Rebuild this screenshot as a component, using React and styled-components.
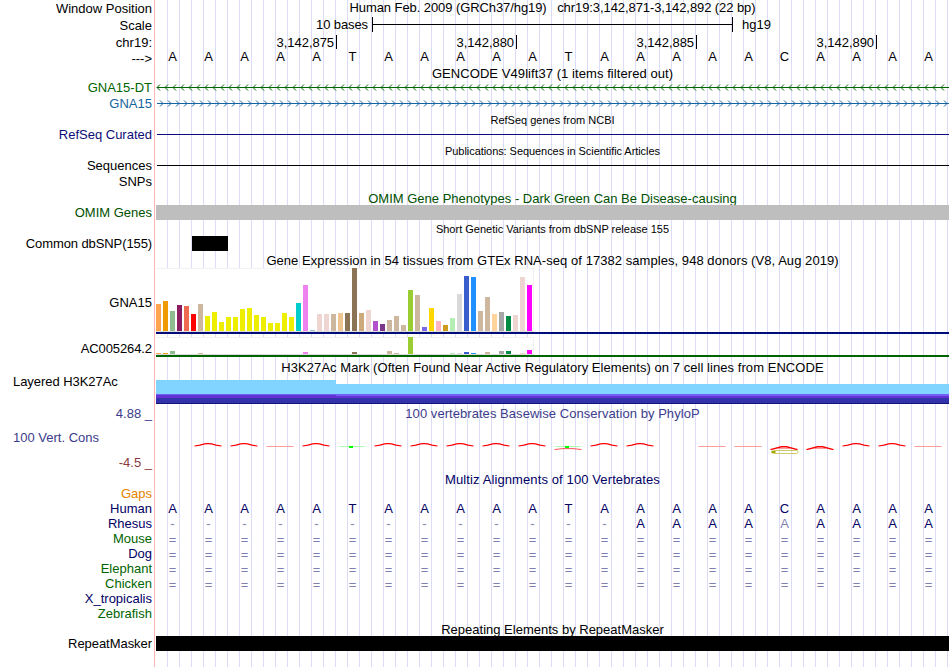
import React from 'react';
import styled, { createGlobalStyle } from 'styled-components';

const GlobalStyle = createGlobalStyle`
    body {
        margin: 0;
        background: #fff;
        overflow: hidden;
    }
`

const Browser = styled.div`
    display: flex;
    flex-direction: column;
    width: 949px;
    height: 667px;
    overflow: hidden;
    font-family: 'Liberation Sans', Arial, sans-serif;
    font-size: 13px;
    color: #000;
    background:
        linear-gradient(#ffb4b4, #ffb4b4) 154px 0 / 1px 100% no-repeat,
        repeating-linear-gradient(90deg, transparent 0 11px, #dcdcf8 11px 12px) 156px 0 / 793px 100% no-repeat;
`

const Row = styled.div`
    display: grid;
    grid-template-columns: 152px 793px;
    grid-template-rows: 100%;
    column-gap: 4px;
    height: ${props => props.$h}px;
    flex: none;
`

const Label = styled.div`
    display: flex;
    justify-content: ${props => props.$left ? 'flex-start' : 'flex-end'};
    align-items: center;
    padding-left: ${props => props.$left ? 13 : 0}px;
    padding-top: ${props => props.$drop || 0}px;
    padding-bottom: ${props => props.$lift || 0}px;
    box-sizing: border-box;
    color: ${props => props.$color || '#000'};
    letter-spacing: ${props => props.$track || 0}px;
    white-space: pre;
    line-height: 15px;
`

const Plot = styled.div`
    display: flex;
    align-items: ${props => props.$align || 'center'};
    min-width: 0;
`

const Title = styled.div`
    flex: 1;
    text-align: center;
    white-space: pre;
    line-height: 15px;
    font-size: ${props => props.$small ? 11 : 13}px;
    color: ${props => props.$color || '#000'};
    letter-spacing: ${props => props.$track || 0}px;
    padding-bottom: ${props => props.$lift || 0}px;
    padding-top: ${props => props.$drop || 0}px;
`

const Block = styled.div`
    height: ${props => props.$h || 15}px;
    width: ${props => props.$w ? props.$w + 'px' : '100%'};
    margin-left: ${props => props.$x || 0}px;
    background: ${props => props.$color};
`

const ScaleText = styled.span`
    width: ${props => props.$w}px;
    text-align: ${props => props.$align || 'right'};
    line-height: 15px;
    white-space: nowrap;
    letter-spacing: ${props => props.$track || 0}px;
`

const ScaleBar = styled.div`
    width: 359px;
    height: 15px;
    margin: 0 9px 0 4px;
    border: solid #000;
    border-width: 0 1px;
    background: linear-gradient(#000, #000) 0 7px / 100% 1px no-repeat;
`

const Tick = styled.div`
    box-sizing: border-box;
    width: ${props => props.$w}px;
    height: 14px;
    padding-right: 2px;
    border-right: 1px solid #000;
    text-align: right;
    line-height: 16px;
    letter-spacing: -0.05px;
`

const Bases = styled.div`
    display: grid;
    grid-template-columns: repeat(22, 36px);
    margin-left: -1.5px;
    padding-top: ${props => props.$drop || 0}px;
    padding-bottom: ${props => props.$lift || 0}px;
    text-align: center;
    line-height: 15px;
    color: ${props => props.$color || '#000'};
`

const Base = styled.span`
    opacity: ${props => props.$faint ? 0.5 : 1};
`

const Expression = styled.div`
    display: flex;
    align-items: flex-end;
    gap: 2px;
    box-sizing: border-box;
    width: 378px;
    height: ${props => props.$h}px;
    background: #fff;
    box-shadow: inset 0 1px #f2f2f2, inset -1px 0 #f2f2f2;
    border-bottom: 1px solid #dcdcdc;
`

const Bar = styled.div`
    width: 5px;
    flex: none;
    height: ${props => props.$h}px;
    background: ${props => props.$color};
`

const Stack = styled.div`
    width: 100%;
`

const Drawing = styled.svg`
    display: block;
    width: 793px;
    height: ${props => props.$h}px;
`

const yellow = '#eeee00'
const tan = '#cdb79e'
const pink = '#eed5d2'

const tissues = [
    '#ffa54f', '#ee9a00', '#8fbc8f', '#8b1c62', '#ee6a50', '#ff0000', tan,
    ...Array(13).fill(yellow),
    '#00cdcd', '#ee82ee', '#9ac0cd', pink, pink, tan, '#eec591', '#8b7355',
    '#8b7355', '#cdaa7d', pink, '#b452cd', '#7a378b', tan, tan, tan,
    '#9acd32', tan, '#7a67ee', '#ffd700', '#ffb6c1', '#cd9b1d', '#b4eeb4',
    '#d9d9d9', '#3a5fcd', '#1e90ff', tan, tan, '#ffd39b', '#a6a6a6',
    '#008b45', pink, pink, '#ff00ff',
]

const gna15 = [
    27, 30, 20, 26, 25, 17, 27, 15, 19, 9, 14, 14, 22, 23, 16, 14, 8, 8, 18,
    14, 28, 46, 1, 17, 17, 17, 18, 18, 63, 18, 21, 10, 7, 11, 15, 6, 41, 36,
    4, 23, 10, 6, 13, 37, 55, 54, 20, 34, 17, 19, 15, 16, 54, 46,
]

const ac005264 = [
    1, 1, 3, 0, 0, 0, 1, 0, 0, 0, 0, 0, 0, 0, 0, 0, 0, 0, 0,
    0, 0, 2, 0, 0, 0, 0, 0, 0, 2, 0, 0, 0, 0, 3, 1, 0, 17, 0,
    0, 0, 0, 0, 1, 1, 2, 1, 0, 2, 0, 3, 3, 0, 1, 4,
]

const human = 'AAAAATAAAAATAAAAACAAAA'
const rhesus = '-------------AAAAAAAAA'

const species = [
    { name: 'Mouse', color: '#006400' },
    { name: 'Dog', color: '#000064' },
    { name: 'Elephant', color: '#006400' },
    { name: 'Chicken', color: '#006400' },
]

// one mark per base: p peak, f flat, t green, u green over red, c deep, d dip
const conservation = ' ppfptpppppupp ffcdppf'

const Sequence = ({ bases, color, faint = () => false, ...rest }) => (
    <Bases $color={color} {...rest}>
        {bases.split('').map((b, i) => <Base key={i} $faint={faint(b, i)}>{b}</Base>)}
    </Bases>
)

const GeneLine = ({ color, reverse }) => (
    <Drawing $h={16} viewBox="0 0 793 16" stroke={color} fill="none">
        <path d="M1 7.5H793" />
        {Array.from({ length: 99 }, (_, i) => (
            <path
                key={i}
                d={reverse
                    ? `M${i * 8 + 4} 4.5L${i * 8 + 1} 7.5L${i * 8 + 4} 10.5`
                    : `M${i * 8 + 4} 4.5L${i * 8 + 7} 7.5L${i * 8 + 4} 10.5`}
            />
        ))}
    </Drawing>
)

const Mark = ({ type, x }) => {
    const peak = (
        <path d={`M${x - 13.5} 6L${x - 8} 5.2L${x - 3.5} 3.9Q${x} 3.2 ${x + 3.5} 3.9L${x + 8} 5.2L${x + 13.5} 6`} stroke="#ff0000" strokeWidth="1.2" />
    )
    const steep = (
        <>
            <path d={`M${x - 13.5} 9.6L${x - 2.5} 6.8H${x + 2.5}L${x + 13.5} 9.6`} stroke="#ff0000" strokeWidth="1.4" />
            <path d={`M${x - 6} 8.5H${x + 6}`} stroke="#ff8080" strokeWidth="0.8" />
        </>
    )
    const green = (
        <>
            <path d={`M${x - 13} 6.5H${x + 13}`} stroke="#b0ffb0" />
            <rect x={x - 3} y="6" width="4" height="2" fill="#00ff00" />
        </>
    )
    switch (type) {
        case 'p': return peak
        case 'f': return <path d={`M${x - 13.5} 6.5H${x + 13.5}`} stroke="#ff9c9c" />
        case 't': return green
        case 'u': return (
            <>
                {green}
                <path d={`M${x - 13.5} 9.6L${x - 5} 8.6H${x + 5}L${x + 13.5} 9.6`} stroke="#ff4040" strokeWidth="0.9" />
            </>
        )
        case 'd': return steep
        case 'c': return (
            <>
                {steep}
                <rect x={x - 12} y="10.5" width="26" height="3" rx="1.5" stroke="#cccc66" />
                <rect x={x - 12.5} y="11" width="4" height="2" fill="#a8a800" />
            </>
        )
        default: return null
    }
}

const TitleRow = ({ h, children, ...rest }) => (
    <Row $h={h}>
        <span />
        <Plot><Title {...rest}>{children}</Title></Plot>
    </Row>
)

const App = () => (
    <>
        <GlobalStyle />
        <Browser>
            <Row $h={16}>
                <Label $drop={1}>Window Position</Label>
                <Plot><Title $lift={1} $track={-0.08}>{'Human Feb. 2009 (GRCh37/hg19)   chr19:3,142,871-3,142,892 (22 bp)'}</Title></Plot>
            </Row>
            <Row $h={17}>
                <Label $drop={1}>Scale</Label>
                <Plot>
                    <ScaleText $w={212} $track={-0.1}>10 bases</ScaleText>
                    <ScaleBar />
                    <ScaleText $w={40} $align="left">hg19</ScaleText>
                </Plot>
            </Row>
            <Row $h={17}>
                <Label $drop={2}>chr19:</Label>
                <Plot>
                    {[181, 180, 180, 180].map((w, i) => (
                        <Tick key={i} $w={w}>{`3,142,${875 + i * 5}`}</Tick>
                    ))}
                </Plot>
            </Row>
            <Row $h={15}>
                <Label $drop={1}>---&gt;</Label>
                <Plot><Sequence bases={human} $lift={3} /></Plot>
            </Row>

            <TitleRow h={15} $drop={1} $track={0.07}>GENCODE V49lift37 (1 items filtered out)</TitleRow>
            <Row $h={16}>
                <Label $color="#006400" $lift={2}>GNA15-DT</Label>
                <Plot><GeneLine color="#006400" reverse /></Plot>
            </Row>
            <Row $h={16}>
                <Label $color="#1464a0" $lift={2}>GNA15</Label>
                <Plot><GeneLine color="#1464a0" /></Plot>
            </Row>

            <TitleRow h={15} $small $drop={2}>RefSeq genes from NCBI</TitleRow>
            <Row $h={15}>
                <Label $color="#0c0c78">RefSeq Curated</Label>
                <Plot><Block $h={1} $x={1} $color="#0c0c78" /></Plot>
            </Row>
            <TitleRow h={16} $small $drop={2} $track={-0.06}>Publications: Sequences in Scientific Articles</TitleRow>
            <Row $h={15}>
                <Label>Sequences</Label>
                <Plot><Block $h={1} $x={1} $color="#000" /></Plot>
            </Row>
            <Row $h={17}>
                <Label>SNPs</Label>
            </Row>

            <TitleRow h={15} $drop={1} $color="#005000">OMIM Gene Phenotypes - Dark Green Can Be Disease-causing</TitleRow>
            <Row $h={15}>
                <Label $color="#005000">OMIM Genes</Label>
                <Plot><Block $color="#bebebe" /></Plot>
            </Row>
            <TitleRow h={16} $small $drop={2}>Short Genetic Variants from dbSNP release 155</TitleRow>
            <Row $h={15}>
                <Label $track={-0.1}>Common dbSNP(155)</Label>
                <Plot><Block $x={36} $w={36} $color="#000" /></Plot>
            </Row>

            <TitleRow h={17} $drop={2} $track={0.055}>Gene Expression in 54 tissues from GTEx RNA-seq of 17382 samples, 948 donors (V8, Aug 2019)</TitleRow>
            <Row $h={69}>
                <Label>GNA15</Label>
                <Plot $align="flex-start">
                    <Stack>
                        <Expression $h={64}>
                            {gna15.map((h, i) => <Bar key={i} $h={h} $color={tissues[i]} />)}
                        </Expression>
                        <Block $h={2} $color="#000c78" />
                    </Stack>
                </Plot>
            </Row>
            <Row $h={23}>
                <Label $track={-0.1}>AC005264.2</Label>
                <Plot $align="flex-start">
                    <Stack>
                        <Expression $h={18}>
                            {ac005264.map((h, i) => <Bar key={i} $h={h} $color={tissues[i]} />)}
                        </Expression>
                        <Block $h={2} $color="#006400" />
                    </Stack>
                </Plot>
            </Row>

            <TitleRow h={20} $lift={6} $track={0.055}>H3K27Ac Mark (Often Found Near Active Regulatory Elements) on 7 cell lines from ENCODE</TitleRow>
            <Row $h={24}>
                <Label $left $lift={22} $track={-0.05}>Layered H3K27Ac</Label>
                <Plot $align="flex-start">
                    <Stack>
                        <Block $h={4} $w={180} $color="#80d4ff" />
                        <Block $h={10} $color="#80d4ff" />
                        <Block $h={1} $color="#7060f8" />
                        <Block $h={1} $color="linear-gradient(90deg, #6432d2 180px, #7060f8 180px)" />
                        <Block $h={2} $color="#6432d2" />
                        <Block $h={5} $color="#3232aa" />
                        <Block $h={1} $color="#141478" />
                    </Stack>
                </Plot>
            </Row>

            <Row $h={20}>
                <Label $color="#3c3c8c" $lift={1}>4.88 _</Label>
                <Plot><Title $color="#3c3c8c" $lift={2} $track={0.05}>100 vertebrates Basewise Conservation by PhyloP</Title></Plot>
            </Row>
            <Row $h={30}>
                <Label $left $color="#3c3c8c" $lift={4}>100 Vert. Cons</Label>
                <Plot $align="flex-end">
                    <Drawing $h={14} viewBox="0 0 793 14" fill="none">
                        {conservation.split('').map((type, i) => (
                            <Mark key={i} type={type} x={16 + i * 36} />
                        ))}
                    </Drawing>
                </Plot>
            </Row>
            <Row $h={17}>
                <Label $color="#8c3c3c">-4.5 _</Label>
            </Row>

            <TitleRow h={15} $color="#000064" $drop={2} $track={0.11}>Multiz Alignments of 100 Vertebrates</TitleRow>
            <Row $h={15}>
                <Label $color="#e68200">Gaps</Label>
            </Row>
            <Row $h={15}>
                <Label $color="#000064">Human</Label>
                <Plot><Sequence bases={human} color="#000064" /></Plot>
            </Row>
            <Row $h={15}>
                <Label $color="#000064">Rhesus</Label>
                <Plot><Sequence bases={rhesus} color="#000064" faint={(b, i) => b === '-' || i === 17} /></Plot>
            </Row>
            {species.map(({ name, color }) => (
                <Row key={name} $h={15}>
                    <Label $color={color}>{name}</Label>
                    <Plot><Sequence bases={'='.repeat(22)} color="#000064" faint={() => true} $drop={2} /></Plot>
                </Row>
            ))}
            <Row $h={15}>
                <Label $color="#000064">X_tropicalis</Label>
            </Row>
            <Row $h={15}>
                <Label $color="#006400">Zebrafish</Label>
            </Row>

            <TitleRow h={15} $drop={2}>Repeating Elements by RepeatMasker</TitleRow>
            <Row $h={15}>
                <Label $track={-0.05}>RepeatMasker</Label>
                <Plot><Block $color="#000" /></Plot>
            </Row>
        </Browser>
    </>
)

export default App
